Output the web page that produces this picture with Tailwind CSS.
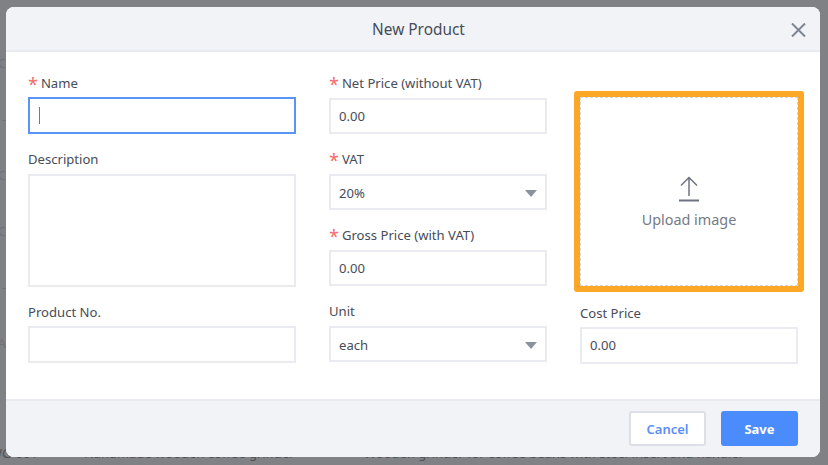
<!DOCTYPE html>
<html lang="en">
<head>
    <meta charset="UTF-8">
    <meta name="viewport" content="width=device-width, initial-scale=1.0">
    <title>New Product</title>
    <script src="https://cdn.jsdelivr.net/npm/@tailwindcss/browser@4"></script>
</head>
<body class="relative w-[828px] h-[465px] overflow-hidden bg-[#808185] font-['Noto_Sans',sans-serif] text-[13.1px] text-[#474c59]">
    <!-- page behind the overlay -->
    <div class="absolute left-0 top-[445px] w-full text-[13px] leading-[16px] text-[#4f5054]">
        <span class="absolute left-[-10px] top-0 whitespace-nowrap">WG-001</span>
        <span class="absolute left-[84px] top-0 whitespace-nowrap">Handmade wooden coffee grinder</span>
        <span class="absolute left-[364px] top-0 whitespace-nowrap">Wooden grinder for coffee beans with steel insert and handle.</span>
    </div>
    <div class="absolute left-0 top-0 w-[6px] h-[400px] text-[13px] text-[#727378]">
        <span class="absolute right-0 top-[54px]">C</span>
        <span class="absolute right-0 top-[110px]">-</span>
        <span class="absolute right-0 top-[166px]">C</span>
        <span class="absolute right-0 top-[222px]">C</span>
        <span class="absolute right-0 top-[278px]">-</span>
        <span class="absolute right-0 top-[334px]">A</span>
    </div>

    <!-- modal -->
    <div class="absolute left-[6px] top-[7px] w-[814px] h-[450px] flex flex-col bg-white rounded-[8px] overflow-hidden">
        <div class="relative h-[45px] shrink-0 flex items-center justify-center pl-[11px] bg-[#f1f3f7] border-b-2 border-[#e8eaef]">
            <h2 class="text-[15.4px] text-[#474c59] pt-[2px]">New Product</h2>
            <svg class="absolute left-[785px] top-[16px]" width="15" height="14" viewBox="0 0 15 14" fill="none" stroke="#7d8594" stroke-width="2">
                <path d="M1 .5 14 13.5M14 .5 1 13.5"/>
            </svg>
        </div>

        <div class="flex-1 flex pl-[22px] pt-[25px]">
            <!-- column 1 -->
            <div class="w-[268px] flex flex-col">
                <label class="h-[11px] flex items-center gap-[3px] leading-[18px]"><span class="text-[18px] text-[#f66c6c] leading-[18px] mt-[3px]">*</span>Name</label>
                <div class="mt-[9px] h-[37px] flex items-center pl-[9px] border-2 border-[#5a95f5]">
                    <span class="w-px h-[17px] bg-[#4a7fd8]"></span>
                </div>
                <label class="mt-[19px] h-[11px] flex items-center leading-[18px]">Description</label>
                <div class="mt-[10px] h-[113px] border-2 border-[#e9ebf0]"></div>
                <label class="mt-[19px] h-[11px] flex items-center leading-[18px]">Product No.</label>
                <div class="mt-[9px] h-[37px] border-2 border-[#e9ebf0]"></div>
            </div>

            <!-- column 2 -->
            <div class="ml-[33px] w-[218px] flex flex-col">
                <label class="h-[11px] flex items-center gap-[3px] leading-[18px]"><span class="text-[18px] text-[#f66c6c] leading-[18px] mt-[3px]">*</span>Net Price (without VAT)</label>
                <div class="mt-[10px] h-[36px] flex items-center pl-[8px] pt-[2px] border-2 border-[#e9ebf0]">0.00</div>
                <label class="mt-[19px] h-[11px] flex items-center gap-[3px] leading-[18px]"><span class="text-[18px] text-[#f66c6c] leading-[18px] mt-[3px]">*</span>VAT</label>
                <div class="mt-[10px] h-[36px] flex items-center justify-between pl-[8px] pr-[8px] pt-[3px] border-2 border-[#e9ebf0]">20%
                    <svg width="12" height="7" viewBox="0 0 12 7"><path d="M0 0h12L6 7z" fill="#8b929e"/></svg>
                </div>
                <label class="mt-[19px] h-[11px] flex items-center gap-[3px] leading-[18px]"><span class="text-[18px] text-[#f66c6c] leading-[18px] mt-[3px]">*</span>Gross Price (with VAT)</label>
                <div class="mt-[10px] h-[36px] flex items-center pl-[8px] pt-[2px] border-2 border-[#e9ebf0]">0.00</div>
                <label class="mt-[19px] h-[11px] flex items-center leading-[18px]">Unit</label>
                <div class="mt-[10px] h-[36px] flex items-center justify-between pl-[8px] pr-[8px] pt-[3px] border-2 border-[#e9ebf0]">each
                    <svg width="12" height="7" viewBox="0 0 12 7"><path d="M0 0h12L6 7z" fill="#8b929e"/></svg>
                </div>
            </div>

            <!-- column 3 -->
            <div class="ml-[33px] w-[218px] flex flex-col">
                <div class="-mx-[6px] mt-[14px] h-[201px] border-[6px] border-[#fca726] rounded-[3px]">
                    <div class="h-full flex flex-col items-center justify-center pt-[23px] border border-dashed border-[#d4d6db]">
                        <svg width="22" height="26" viewBox="0 0 22 26" fill="none" stroke="#6f7280" stroke-width="1.5">
                            <path d="M11 20V2M3 9.5 11 1.5l8 8"/><path d="M1 24.5h20" stroke-width="2"/>
                        </svg>
                        <span class="mt-[7px] text-[14.4px] text-[#767a86]">Upload image</span>
                    </div>
                </div>
                <label class="mt-[15px] h-[11px] flex items-center leading-[18px]">Cost Price</label>
                <div class="mt-[9px] h-[37px] flex items-center pl-[8px] pt-[1px] border-2 border-[#e9ebf0]">0.00</div>
            </div>
        </div>

        <div class="h-[58px] shrink-0 flex items-center justify-end gap-[15px] pr-[22px] pb-[1px] bg-[#f1f3f7] border-t-2 border-[#e8eaef]">
            <button class="w-[77px] h-[35px] pt-[2px] bg-white border-2 border-[#dcdfe5] rounded-[3px] text-[13px] font-semibold text-[#5b8ff5]">Cancel</button>
            <button class="w-[77px] h-[35px] pt-[2px] bg-[#4a8cfd] rounded-[3px] text-[13px] font-bold text-white">Save</button>
        </div>
    </div>
</body>
</html>
